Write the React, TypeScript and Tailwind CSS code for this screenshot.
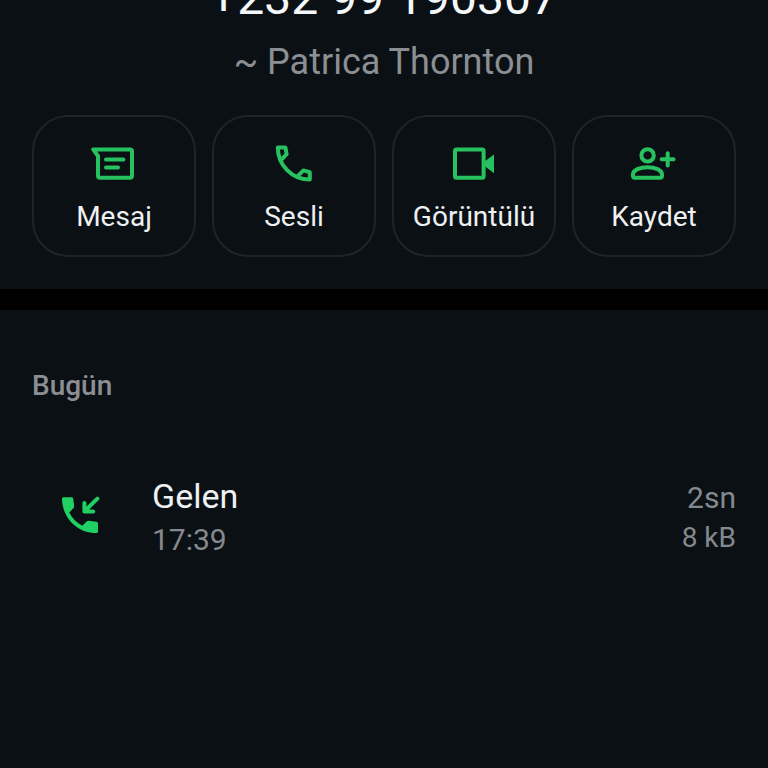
import type { ReactNode } from 'react';

const strokeProps = {
  fill: 'none',
  stroke: 'currentColor',
  strokeWidth: 4,
  strokeLinecap: 'round',
  strokeLinejoin: 'round',
} as const;

function MessageIcon() {
  return (
    <svg viewBox="0 0 48 48" className="size-12" aria-hidden="true" {...strokeProps}>
      <path d="M3.2 10.4H40a2 2 0 0 1 2 2V36.7a2 2 0 0 1-2 2H10a2 2 0 0 1-2-2V17Z" />
      <path d="M16 20.4H33.4M16 28.6H28" />
    </svg>
  );
}

function CallIcon() {
  return (
    <svg viewBox="0 0 48 48" className="size-12" aria-hidden="true" {...strokeProps}>
      <path d="M12 20.2 16.6 15.2 15.4 8.4H7.8C7.8 26 22 40.6 39.8 40.6V33.2L33.4 31.4 28 36.8" />
    </svg>
  );
}

function VideoIcon() {
  return (
    <svg viewBox="0 0 48 48" className="size-12" aria-hidden="true" {...strokeProps}>
      <rect x="5" y="10.4" width="28.6" height="28.3" rx="1.5" />
      <path d="M34.5 22.5 44 15.5V34.2L34.5 27Z" fill="currentColor" stroke="none" />
    </svg>
  );
}

function AddContactIcon() {
  return (
    <svg viewBox="0 0 48 48" className="size-12" aria-hidden="true" {...strokeProps}>
      <circle cx="17.6" cy="16.4" r="6.2" />
      <path d="M3 35.6C3 30.8 10 28.3 17.5 28.3S32 30.8 32 35.6V36.7a2 2 0 0 1-2 2H5a2 2 0 0 1-2-2Z" />
      <path d="M37.7 14.2V26.4M31.6 20.3H43.6" />
    </svg>
  );
}

function IncomingCallIcon() {
  return (
    <svg
      viewBox="0 0 24 24"
      className="size-12"
      fill="none"
      stroke="currentColor"
      strokeLinecap="round"
      strokeLinejoin="round"
      aria-hidden="true"
    >
      <path
        d="M20.2 15.4q.8.1.8.8v4q0 .8-.8.8C11 21.2 3.2 13.8 3 3.9Q3 3.1 3.8 3.1h4q.7 0 .8.7l.5 3.8q.1.5-.3.9L6.62 10.78c1.44 2.84 3.76 5.15 6.59 6.59l2.2-2.2q.4-.4.9-.3z"
        fill="currentColor"
        stroke="none"
      />
      <path d="M14.2 6V10.2H18.6M14.4 10 20.7 3.8" strokeWidth="2" />
    </svg>
  );
}

const actions: { label: string; icon: ReactNode }[] = [
  { label: 'Mesaj', icon: <MessageIcon /> },
  { label: 'Sesli', icon: <CallIcon /> },
  { label: 'Görüntülü', icon: <VideoIcon /> },
  { label: 'Kaydet', icon: <AddContactIcon /> },
];

export default function App() {
  return (
    <main className="min-h-screen overflow-hidden bg-[#0b1014] font-[Roboto,sans-serif]">
      {/* Contact */}
      <header className="px-8 pb-8">
        <h1 className="-mt-[30px] text-center text-5xl/[56px] text-[#f5f8fa]">+232 99 190307</h1>
        <p className="mt-3.5 text-center text-4xl/[44px] text-[#8b8f93]">~ Patrica Thornton</p>

        <div className="mt-[31px] grid grid-cols-4 gap-4">
          {actions.map(({ label, icon }) => (
            <button
              key={label}
              type="button"
              className="flex flex-col items-center rounded-[36px] border-2 border-[#202428] pt-[22px] pb-5 text-[#27c15f]"
            >
              {icon}
              <span className="mt-3 text-[28px]/9 text-[#eef1f3]">{label}</span>
            </button>
          ))}
        </div>
      </header>

      <div className="h-[21px] bg-black" />

      {/* Call log */}
      <section className="px-8 pt-15">
        <h2 className="text-[28px]/8 font-medium text-[#8b8f93]">Bugün</h2>

        <div className="mt-[74px] flex items-start">
          <div className="mt-[15px] ml-6 text-[#21d063]">
            <IncomingCallIcon />
          </div>
          <div className="ml-12 flex-1">
            <p className="text-[34px]/10 text-[#eef1f3]">Gelen</p>
            <p className="mt-1 text-[30px]/10 text-[#85898d]">17:39</p>
          </div>
          <div className="pt-0.5 text-right text-[#85898d]">
            <p className="text-[30px]/10">2sn</p>
            <p className="text-[28px]/10">8 kB</p>
          </div>
        </div>
      </section>
    </main>
  );
}
